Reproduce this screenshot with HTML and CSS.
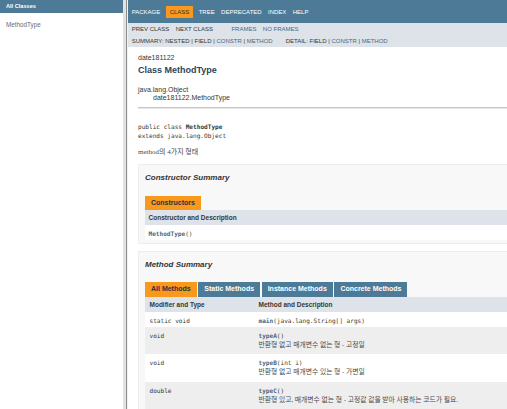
FILE: index.html
```html
<!DOCTYPE html>
<html lang="ko">
<head>
<meta charset="utf-8">
<title>MethodType</title>
<link rel="stylesheet" href="styles.css">
</head>
<body>
<div class="frames">
  <aside class="class-frame">
    <h1 class="bar">All Classes</h1>
    <ul class="class-list"><li><a href="#">MethodType</a></li></ul>
  </aside>
  <div class="frame-divider"></div>
  <main class="doc-frame">
    <div class="doc">
      <nav class="top-nav">
        <ul class="nav-list">
          <li>PACKAGE</li>
          <li class="current">CLASS</li>
          <li>TREE</li>
          <li>DEPRECATED</li>
          <li>INDEX</li>
          <li>HELP</li>
        </ul>
      </nav>
      <div class="sub-nav">
        <div class="sub-row">
          <span class="group"><span>PREV CLASS</span><span>NEXT CLASS</span></span>
          <span class="group frames-links"><a href="#">FRAMES</a><a href="#">NO FRAMES</a></span>
        </div>
        <div class="sub-row">
          <span>SUMMARY: NESTED | FIELD | <a href="#">CONSTR</a> | <a href="#">METHOD</a></span>
          <span class="detail">DETAIL: FIELD | <a href="#">CONSTR</a> | <a href="#">METHOD</a></span>
        </div>
      </div>
      <div class="content">
        <div class="sub-title">date181122</div>
        <h2 class="title">Class MethodType</h2>
        <ul class="inheritance">
          <li>java.lang.Object
            <ul class="inheritance inner"><li>date181122.MethodType</li></ul>
          </li>
        </ul>
        <hr class="rule">
        <pre class="signature">public class <b>MethodType</b>
extends java.lang.Object</pre>
        <div class="block desc">method의 4가지 형태</div>

        <section class="summary-box">
          <h3 class="summary-title">Constructor Summary</h3>
          <div class="tabs"><span class="tab active">Constructors</span></div>
          <table class="member-table">
            <tr><th>Constructor and Description</th></tr>
            <tr class="alt"><td><code><a href="#" class="member">MethodType</a>()</code></td></tr>
          </table>
        </section>

        <section class="summary-box">
          <h3 class="summary-title">Method Summary</h3>
          <div class="tabs">
            <span class="tab active">All Methods</span>
            <span class="tab">Static Methods</span>
            <span class="tab">Instance Methods</span>
            <span class="tab">Concrete Methods</span>
          </div>
          <table class="member-table">
            <tr><th class="col-first">Modifier and Type</th><th>Method and Description</th></tr>
            <tr class="alt"><td class="col-first"><code>static void</code></td><td><code><a href="#" class="member">main</a>(java.lang.String[]&nbsp;args)</code></td></tr>
            <tr class="row"><td class="col-first"><code>void</code></td><td><code><a href="#" class="member">typeA</a>()</code><div class="block">반환형 없고 매개변수 없는 형 - 고정일</div></td></tr>
            <tr class="alt"><td class="col-first"><code>void</code></td><td><code><a href="#" class="member">typeB</a>(int&nbsp;i)</code><div class="block">반환형 없고 매개변수 있는 형 - 가변일</div></td></tr>
            <tr class="row"><td class="col-first"><code>double</code></td><td><code><a href="#" class="member">typeC</a>()</code><div class="block">반환형 있고, 매개변수 없는 형 - 고정값 값을 받아 사용하는 코드가 필요.</div></td></tr>
          </table>
        </section>
      </div>
    </div>
  </main>
</div>
</body>
</html>
```

FILE: styles.css
```css
* { box-sizing: border-box; }
html, body { margin: 0; padding: 0; }
body {
  width: 507px;
  height: 409px;
  overflow: hidden;
  background: #fff;
  font-family: "Liberation Sans", Arial, sans-serif;
  font-size: 7px;
  color: #353833;
}
a { color: #4A6782; text-decoration: none; }

.frames { display: flex; height: 409px; }

/* left frame */
.class-frame { width: 123px; flex: none; }
.bar {
  margin: 0;
  height: 13px;
  background: #4D7A97;
  color: #fff;
  font-size: 5.6px;
  font-weight: bold;
  line-height: 13px;
  padding-left: 6px;
}
.class-list {
  list-style: none;
  margin: 0;
  padding: 6.5px 0 0 6px;
  font-size: 6.3px;
  line-height: 9px;
}
.class-list a { color: #5b6e7e; }

.frame-divider {
  width: 5px;
  flex: none;
  background: linear-gradient(to right, #e2e2e2 0 3px, #8d8d8d 3px 4px, #f2f2f2 4px);
}

/* right frame */
.doc-frame { flex: 1; min-width: 0; overflow: hidden; }
.doc { width: 470px; }

.top-nav {
  background: #4D7A97;
  height: 23px;
  display: flex;
  align-items: center;
  padding-left: 0.5px;
}
.nav-list {
  display: flex;
  list-style: none;
  margin: 0;
  padding: 0;
  font-size: 6px;
  color: #fff;
}
.nav-list li { padding: 3px 3.2px; line-height: 6px; white-space: nowrap; }
.nav-list .current { background: #F8981D; color: #253441; margin: 0 3px; }

.sub-nav {
  background: #dee3e9;
  height: 24px;
  padding-left: 3.7px;
  font-size: 6px;
  line-height: 12px;
}
.sub-row { display: flex; white-space: nowrap; }
.group { display: flex; gap: 6.4px; }
.frames-links { margin-left: 18.4px; }
.detail { margin-left: 13px; }

.content { padding-left: 10px; }
.sub-title { font-size: 7px; line-height: 9px; margin-top: 5.5px; }
.title {
  font-size: 9px;
  font-weight: bold;
  color: #2c4557;
  line-height: 11px;
  margin: 3px 0 0;
}
.inheritance {
  list-style: none;
  margin: 10.5px 0 0;
  padding: 0;
  font-size: 7px;
  line-height: 8px;
}
.inheritance.inner { margin: 0; padding-left: 15px; }
.rule {
  margin: 5px 0 0;
  border: 0;
  height: 2px;
  background: linear-gradient(#c6c6c6 0 1px, #e6e6e6 1px);
}
.signature {
  margin: 12.5px 0 0;
  font-family: "DejaVu Sans Mono", "Liberation Mono", monospace;
  font-size: 6.1px;
  line-height: 9px;
  color: #353833;
}
.block {
  font-family: "Liberation Serif", "Noto Sans CJK KR", serif;
  color: #474747;
}
.desc { margin-top: 8.5px; font-size: 7px; line-height: 9px; }

.summary-box {
  margin-top: 7px;
  border: 1px solid #ededed;
  background: #f8f8f8;
  padding: 8px 0 3px 6px;
}
.summary-title {
  margin: 0 0 12.5px;
  font-size: 8px;
  line-height: 10px;
  font-weight: bold;
  font-style: italic;
  color: #333;
}
.tabs { display: flex; gap: 1.6px; height: 14.4px; }
.tab {
  padding: 0 6px;
  font-size: 7px;
  font-weight: bold;
  line-height: 14.4px;
  background: #4D7A97;
  color: #fff;
  white-space: nowrap;
}
.tab.active { background: #F8981D; color: #253441; }

.member-table { width: 100%; border-collapse: collapse; border-spacing: 0; }
.member-table th {
  background: #dee3e9;
  font-size: 6.5px;
  font-weight: bold;
  line-height: 15px;
  height: 15px;
  text-align: left;
  padding: 0 0 0 3.5px;
  color: #353833;
}
.member-table th.col-first { padding-left: 4.5px; }
.member-table td {
  padding: 4px 1.5px 2px 3.5px;
  font-family: "DejaVu Sans Mono", "Liberation Mono", monospace;
  font-size: 6.1px;
  line-height: 9px;
  vertical-align: top;
}
.member-table td.col-first { width: 110px; padding-left: 4.5px; }
.member-table tr.alt { background: #fff; }
.member-table tr.row { background: #eeeeef; }
.member-table code {
  display: block;
  font-family: inherit;
  font-size: inherit;
  line-height: 9px;
  white-space: nowrap;
}
.member { font-weight: bold; }
.member-table .block {
  font-size: 6.8px;
  line-height: 9.5px;
  margin-bottom: 3px;
  white-space: nowrap;
  color: #4a4a4a;
}
```
